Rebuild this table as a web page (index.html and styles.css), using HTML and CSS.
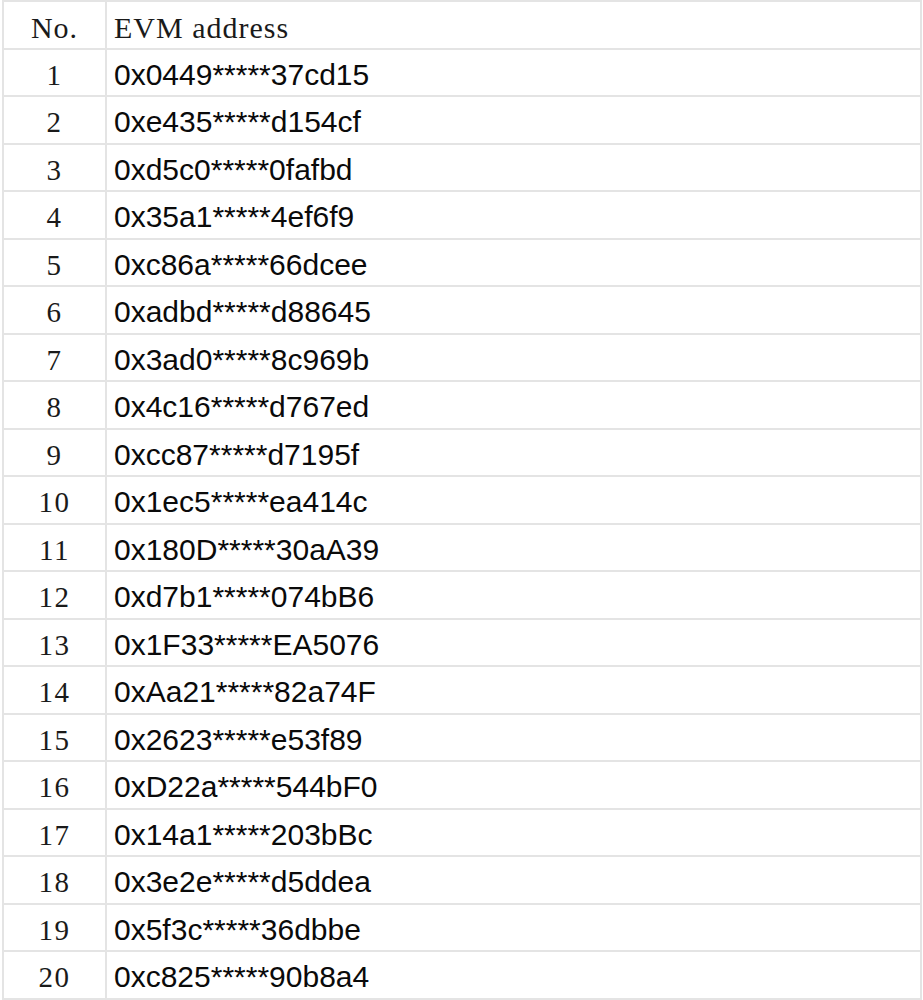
FILE: index.html
```html
<!DOCTYPE html>
<html>
<head>
<meta charset="utf-8">
<link rel="stylesheet" href="styles.css">
</head>
<body>
<table class="list">
  <thead>
    <tr><th class="no head">No.</th><th class="addr-h">EVM address</th></tr>
  </thead>
  <tbody>
    <tr><td class="no">1</td><td class="addr">0x0449*****37cd15</td></tr>
    <tr><td class="no">2</td><td class="addr">0xe435*****d154cf</td></tr>
    <tr><td class="no">3</td><td class="addr">0xd5c0*****0fafbd</td></tr>
    <tr><td class="no">4</td><td class="addr">0x35a1*****4ef6f9</td></tr>
    <tr><td class="no">5</td><td class="addr">0xc86a*****66dcee</td></tr>
    <tr><td class="no">6</td><td class="addr">0xadbd*****d88645</td></tr>
    <tr><td class="no">7</td><td class="addr">0x3ad0*****8c969b</td></tr>
    <tr><td class="no">8</td><td class="addr">0x4c16*****d767ed</td></tr>
    <tr><td class="no">9</td><td class="addr">0xcc87*****d7195f</td></tr>
    <tr><td class="no">10</td><td class="addr">0x1ec5*****ea414c</td></tr>
    <tr><td class="no">11</td><td class="addr">0x180D*****30aA39</td></tr>
    <tr><td class="no">12</td><td class="addr">0xd7b1*****074bB6</td></tr>
    <tr><td class="no">13</td><td class="addr">0x1F33*****EA5076</td></tr>
    <tr><td class="no">14</td><td class="addr">0xAa21*****82a74F</td></tr>
    <tr><td class="no">15</td><td class="addr">0x2623*****e53f89</td></tr>
    <tr><td class="no">16</td><td class="addr">0xD22a*****544bF0</td></tr>
    <tr><td class="no">17</td><td class="addr">0x14a1*****203bBc</td></tr>
    <tr><td class="no">18</td><td class="addr">0x3e2e*****d5ddea</td></tr>
    <tr><td class="no">19</td><td class="addr">0x5f3c*****36dbbe</td></tr>
    <tr><td class="no">20</td><td class="addr">0xc825*****90b8a4</td></tr>
  </tbody>
</table>
</body>
</html>
```

FILE: styles.css
```css
html, body {
  margin: 0;
  padding: 0;
  background: #ffffff;
}

.list {
  border-collapse: collapse;
  width: 920px;
  margin: 0 1px 0 2px;
  color: #111111;
}

.list th,
.list td {
  border: 2px solid #e4e4e4;
  height: 47.5px;
  padding: 0;
  vertical-align: middle;
  box-sizing: border-box;
}

.list .no {
  width: 103px;
  text-align: center;
  font-family: "Liberation Serif", "Times New Roman", serif;
  font-weight: normal;
  font-size: 29px;
  letter-spacing: 1.5px;
  padding-top: 6px;
  color: #1a1a1a;
}

.list .no.head {
  font-size: 30px;
  letter-spacing: 1px;
}

.list .addr-h {
  text-align: left;
  padding-left: 7px;
  padding-top: 6px;
  font-family: "Liberation Serif", "Times New Roman", serif;
  font-weight: normal;
  font-size: 30px;
  letter-spacing: 1px;
  color: #1a1a1a;
}

.list .addr {
  text-align: left;
  padding-left: 7px;
  padding-top: 5px;
  font-family: "Liberation Sans", Arial, sans-serif;
  font-size: 30px;
  letter-spacing: 0;
  color: #0a0a0a;
}
```
